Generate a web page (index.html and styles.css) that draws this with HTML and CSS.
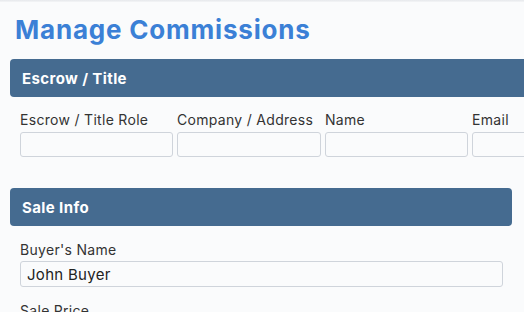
FILE: index.html
```html
<!DOCTYPE html>
<html>
<head>
<meta charset="utf-8">
<link rel="stylesheet" href="styles.css">
</head>
<body>
<div class="topline"></div>
<main class="page">
  <h1 class="title">Manage Commissions</h1>

  <section class="section section-wide">
    <div class="bar">Escrow / Title</div>
    <div class="row4">
      <div class="field"><label class="label">Escrow / Title Role</label><input class="input" type="text"></div>
      <div class="field"><label class="label">Company / Address</label><input class="input" type="text"></div>
      <div class="field"><label class="label">Name</label><input class="input" type="text"></div>
      <div class="field"><label class="label">Email</label><input class="input" type="text"></div>
    </div>
  </section>

  <section class="section">
    <div class="bar">Sale Info</div>
    <div class="stack">
      <div class="field"><label class="label">Buyer's Name</label><input class="input input-full" type="text" value="John Buyer"></div>
      <div class="field"><label class="label">Sale Price</label><input class="input input-full" type="text"></div>
    </div>
  </section>
</main>
</body>
</html>
```

FILE: styles.css
```css
html, body {
  margin: 0;
  padding: 0;
  overflow: hidden;
  background: #fafbfc;
  font-family: Inter, "Noto Sans", sans-serif;
  color: #333;
}
.topline {
  height: 2px;
  background: linear-gradient(#e6e8ec, #f4f5f7);
}
.page {
  padding: 0 12px 0 10px;
}
.title {
  margin: 0;
  padding: 12px 0 0 5px;
  height: 57px;
  box-sizing: border-box;
  font-size: 26px;
  line-height: 32px;
  font-weight: 700;
  letter-spacing: 0.8px;
  color: #3b80d6;
}
.section {
  margin-bottom: 31px;
}
.section-wide {
  width: max-content;
  min-width: 100%;
}
.bar {
  height: 38px;
  box-sizing: border-box;
  padding: 0 12px;
  display: flex;
  align-items: center;
  background: #456b90;
  color: #fff;
  font-weight: 700;
  font-size: 15px;
  letter-spacing: 0.4px;
  border-radius: 4px;
}
.row4 {
  display: grid;
  grid-template-columns: 153px 144px 143px 143px;
  column-gap: 4px;
  padding: 13px 10px 0 10px;
}
.stack {
  display: flex;
  flex-direction: column;
  gap: 14px;
  padding: 14px 9px 0 10px;
}
.field {
  display: flex;
  flex-direction: column;
}
.label {
  font-size: 14px;
  line-height: 20px;
  letter-spacing: 0.3px;
  color: #333;
  white-space: nowrap;
}
.row4 .label { margin-bottom: 2px; }
.stack .label { margin-bottom: 1px; }
.input {
  height: 25px;
  box-sizing: border-box;
  border: 1px solid #cfd4db;
  border-radius: 3px;
  background: #fafbfc;
  font-family: inherit;
  font-size: 15px;
  letter-spacing: 0.3px;
  padding: 0 6px;
  color: #222;
}
.input-full {
  height: 26px;
  width: 100%;
}
```
